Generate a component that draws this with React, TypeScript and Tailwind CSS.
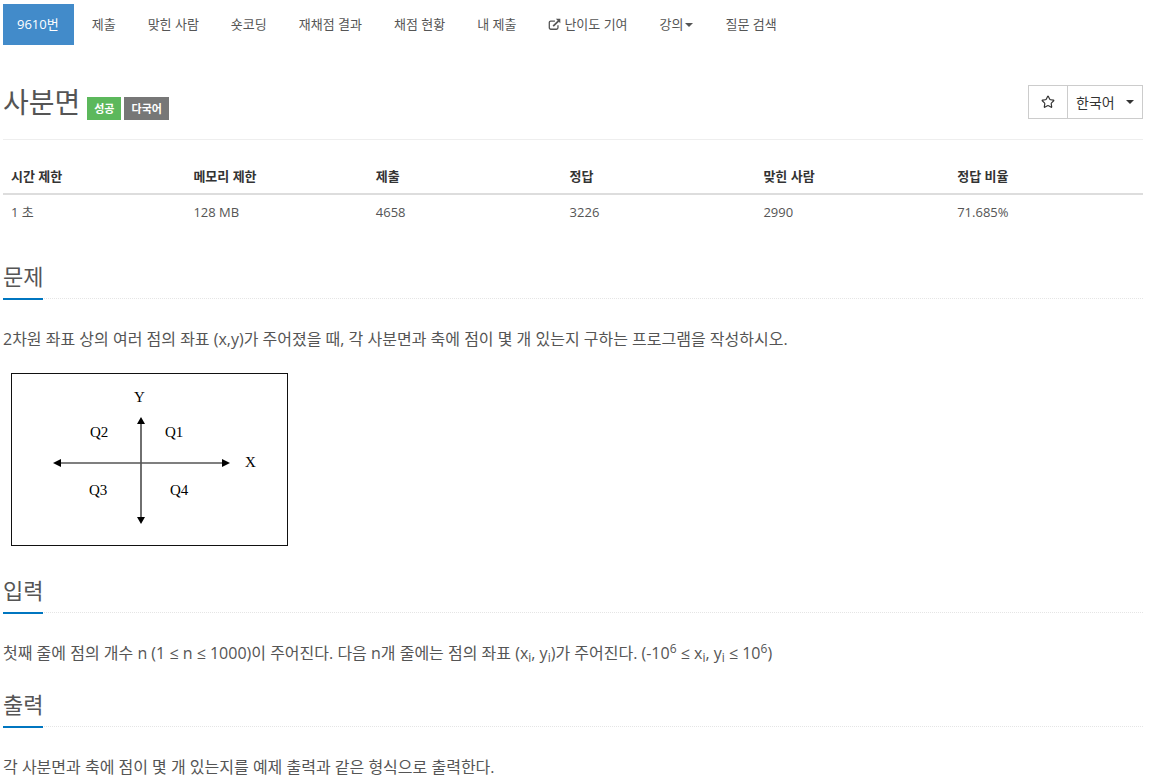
import { Star } from "lucide-react";

const font = { fontFamily: '"Open Sans", "Noto Sans CJK KR", sans-serif' };

const tabs = ["제출", "맞힌 사람", "숏코딩", "재채점 결과", "채점 현황", "내 제출"];

const SectionTitle = ({ title }: { title: string }) => (
  <div className="border-b border-dotted border-[#e5e5e5] h-[40px]">
    <h2 className="inline-block h-[41px] w-10 border-b-2 border-[#0076c0] text-[22px] leading-[28px] text-[#555] whitespace-nowrap pt-[3px]">
      {title}
    </h2>
  </div>
);

const Quadrants = () => (
  <svg width="277" height="173" viewBox="0 0 277 173" className="block ml-2">
    <rect x="0.5" y="0.5" width="276" height="172" fill="#fff" stroke="#111" />
    <g fontFamily="Liberation Serif" fontSize="15" fill="#000">
      <text x="123" y="29">Y</text>
      <text x="79" y="64">Q2</text>
      <text x="154" y="64">Q1</text>
      <text x="234" y="94">X</text>
      <text x="78" y="122">Q3</text>
      <text x="159" y="122">Q4</text>
    </g>
    <path d="M130 48V145" stroke="#222" strokeWidth="1.3" fill="none" />
    <path d="M49 90H213" stroke="#555" strokeWidth="1.5" fill="none" />
    <path d="M130 44l-4 7h8zM130 151l-4-7h8zM42 90l8-4v8zM219 90l-8-4v8z" fill="#000" />
  </svg>
);

// font-awesome style external link
const LinkIcon = () => (
  <svg width="13" height="13" viewBox="0 0 15 15" fill="none" stroke="#555">
    <path d="M8 3.5H3.2a1.7 1.7 0 0 0-1.7 1.7v6.1a1.7 1.7 0 0 0 1.7 1.7h6.6a1.7 1.7 0 0 0 1.7-1.7V8.5" strokeWidth="1.5" />
    <path d="M6 9.5l6.5-6.5" strokeWidth="2" />
    <path d="M9 .8h5.2V6z" fill="#555" stroke="none" />
  </svg>
);

export default function App() {
  return (
    <div className="min-h-screen bg-white text-[#555] pl-[3px] pr-[6px] overflow-hidden" style={font}>
      <nav className="flex items-center pt-1 h-[45px] text-[13px]">
        <a className="flex items-center h-[41px] pl-[14px] pr-[15px] bg-[#428bca] text-white">9610번</a>
        <div className="flex items-center ml-[1px]">
          {tabs.map((t) => (
            <a key={t} className="ml-[2px] px-[15px] whitespace-nowrap">{t}</a>
          ))}
          <a className="ml-[2px] px-[15px] flex items-center gap-[3px] whitespace-nowrap">
            <LinkIcon />
            난이도 기여
          </a>
          <a className="ml-[2px] px-[15px] flex items-center gap-[1px] whitespace-nowrap">
            강의
            <span className="border-x-4 border-t-4 border-x-transparent border-t-[#555]" />
          </a>
          <a className="ml-[3px] px-[15px] whitespace-nowrap">질문 검색</a>
        </div>
      </nav>

      <header className="flex justify-between h-[95px] border-b border-[#eee] pt-[40px]">
        <div className="flex items-start">
          <h1 className="text-[28px] leading-[34px] text-[#555]">사분면</h1>
          <span className="ml-[7px] mt-[12px] h-[23px] w-[34px] text-center bg-[#5cb85c] text-white text-[11px] font-bold leading-[23px]">성공</span>
          <span className="ml-[3px] mt-[12px] h-[23px] w-[45px] text-center bg-[#777] text-white text-[11px] font-bold leading-[23px]">다국어</span>
        </div>
        <div className="flex h-[34px] border border-[#ccc] text-[14px] text-[#333]">
          <button className="w-[39px] border-r border-[#ccc] flex items-center justify-center">
            <Star size={14} strokeWidth={2} strokeLinejoin="miter" />
          </button>
          <button className="w-[74px] flex items-center pl-2 gap-[11px]">
            한국어
            <span className="border-x-4 border-t-4 border-x-transparent border-t-[#333]" />
          </button>
        </div>
      </header>

      <table className="w-full mt-5 table-fixed text-[13px]">
        <colgroup>
          <col className="w-[16%]" />
          <col className="w-[16%]" />
          <col className="w-[17%]" />
          <col className="w-[17%]" />
          <col className="w-[17%]" />
          <col className="w-[17%]" />
        </colgroup>
        <thead>
          <tr className="border-b-2 border-[#ddd] text-[#333]">
            {["시간 제한", "메모리 제한", "제출", "정답", "맞힌 사람", "정답 비율"].map((h) => (
              <th key={h} className="text-left font-bold px-2 h-[34px]">{h}</th>
            ))}
          </tr>
        </thead>
        <tbody>
          <tr>
            {["1 초", "128 MB", "4658", "3226", "2990", "71.685%"].map((c) => (
              <td key={c} className="px-2 h-[36px]">{c}</td>
            ))}
          </tr>
        </tbody>
      </table>

      <section className="mt-[29px]">
        <SectionTitle title="문제" />
        <p className="mt-[28px] text-[16px] leading-[24px]">
          2차원 좌표 상의 여러 점의 좌표 (x,y)가 주어졌을 때, 각 사분면과 축에 점이 몇 개 있는지 구하는 프로그램을 작성하시오.
        </p>
        <div className="mt-[22px]">
          <Quadrants />
        </div>
      </section>

      <section className="mt-[27px]">
        <SectionTitle title="입력" />
        <p className="mt-[28px] text-[16px] leading-[24px] whitespace-nowrap">
          첫째 줄에 점의 개수 n (1 ≤ n ≤ 1000)이 주어진다. 다음 n개 줄에는 점의 좌표 (x<sub>i</sub>, y<sub>i</sub>)가 주어진다. (-10<sup>6</sup> ≤ x<sub>i</sub>, y<sub>i</sub> ≤ 10<sup>6</sup>)
        </p>
      </section>

      <section className="mt-[22px]">
        <SectionTitle title="출력" />
        <p className="mt-[28px] text-[16px] leading-[24px]">
          각 사분면과 축에 점이 몇 개 있는지를 예제 출력과 같은 형식으로 출력한다.
        </p>
      </section>
    </div>
  );
}
